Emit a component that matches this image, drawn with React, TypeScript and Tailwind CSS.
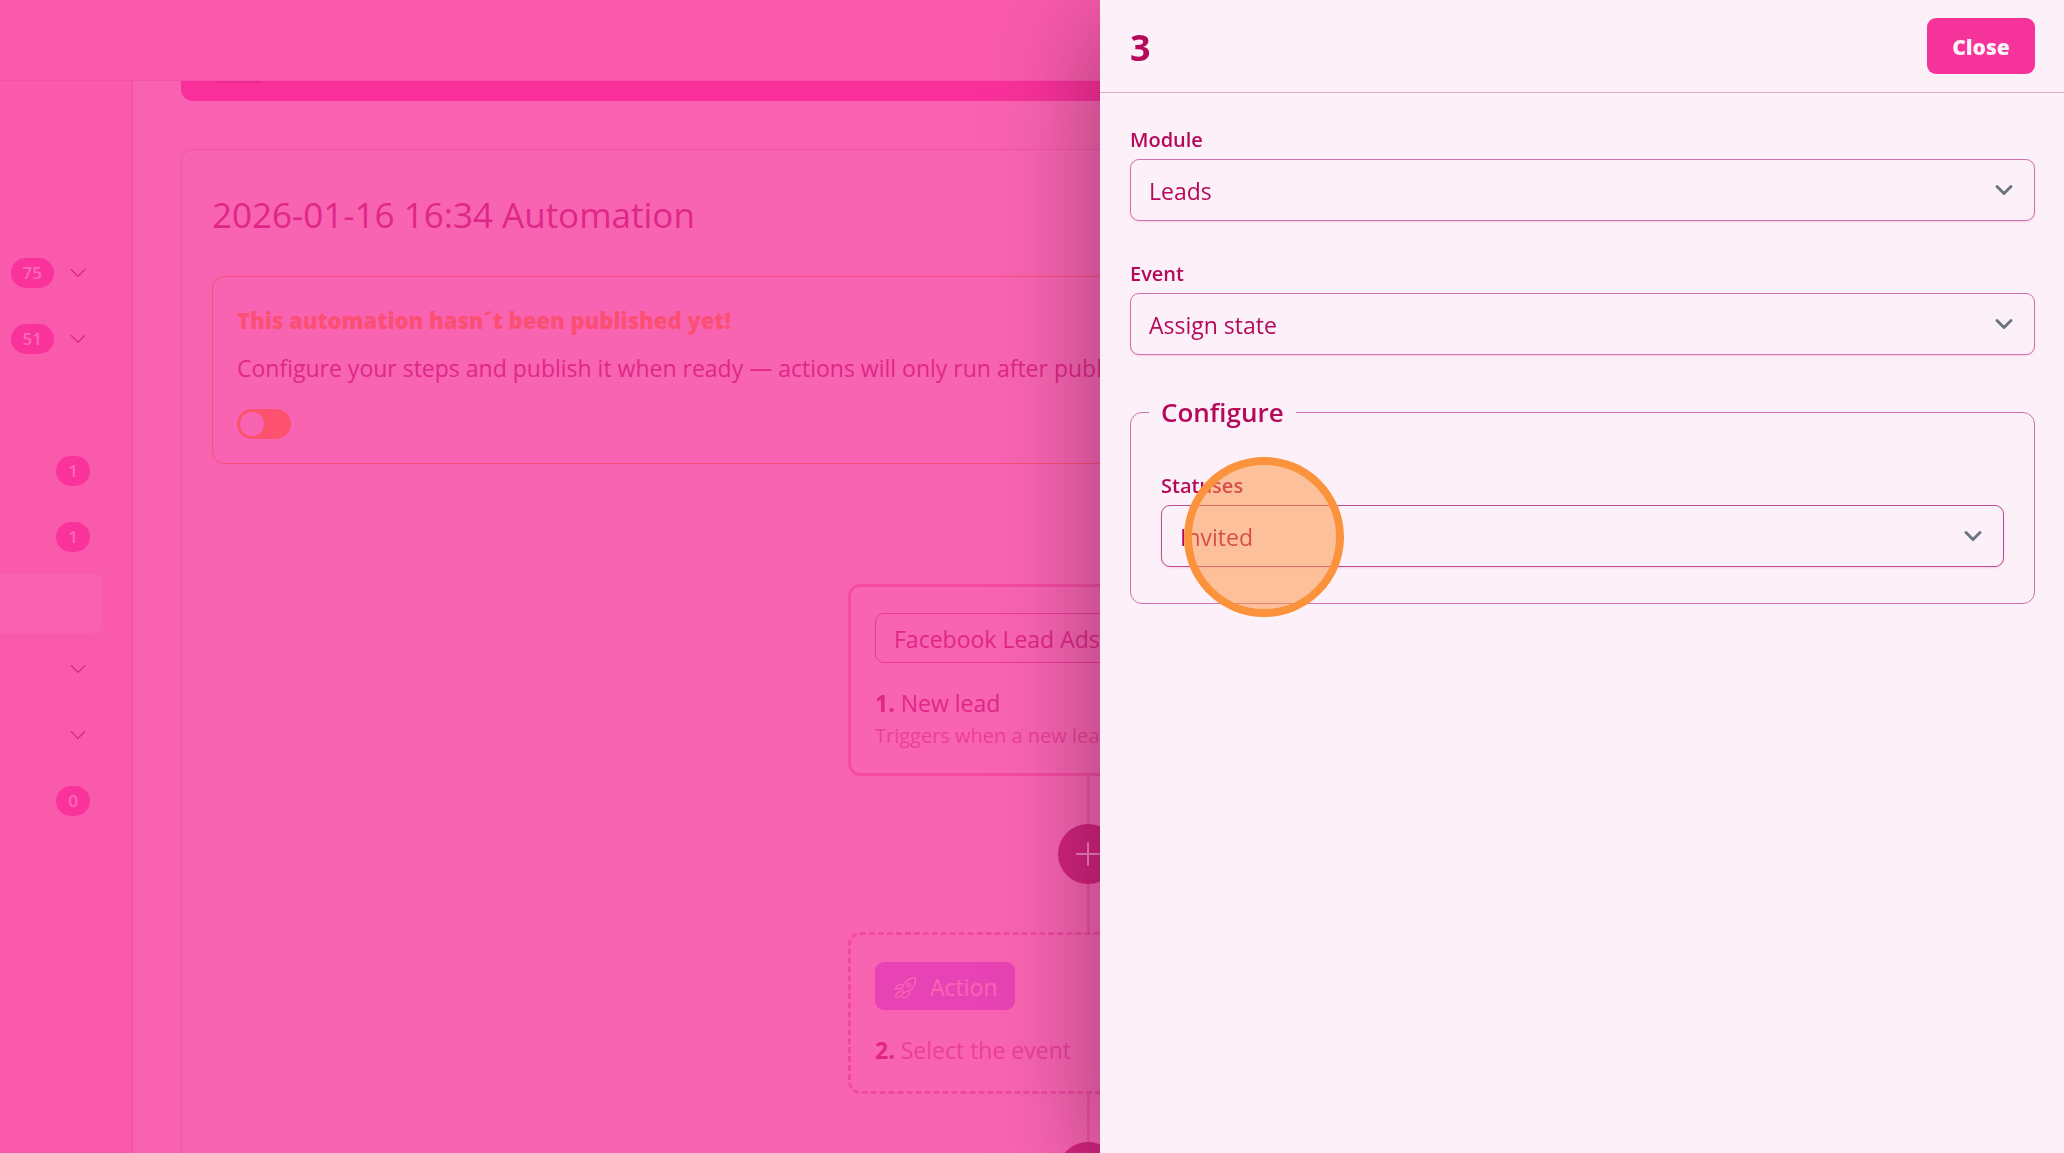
import React, { useState } from 'react';
import clsx from 'clsx';
import { ChevronDown } from 'lucide-react';
import { BsChevronDown, BsPlusLg } from 'react-icons/bs';

type NavItem = { id: string; badge?: string; expandable?: boolean; active?: boolean };

const navItems: NavItem[] = [
  { id: 'leads', badge: '75', expandable: true },
  { id: 'contacts', badge: '51', expandable: true },
  { id: 'calendar' },
  { id: 'messages', badge: '1' },
  { id: 'tasks', badge: '1' },
  { id: 'automations', active: true },
  { id: 'reports', expandable: true },
  { id: 'settings', expandable: true },
  { id: 'archive', badge: '0' },
];

const RocketIcon = () => (
  <svg
    viewBox="0 0 24 24"
    fill="none"
    stroke="currentColor"
    strokeWidth="1.2"
    strokeLinecap="round"
    strokeLinejoin="round"
    className="mt-0.5 size-6"
  >
    <path d="M21.800 1.600c-5.300.2-9.400 2.300-12 6.400l-2.300 5.200 3.300 3.300 5.300-2.400c3.800-2.700 5.600-6.900 5.700-12.500z" />
    <circle cx="14.500" cy="9" r="1.700" />
    <path d="M9.500 8.600c-4-.6-7 .9-8.300 5 2-1 4-1.200 6-.6" />
    <path d="M15.600 14.500c.5 3.700-.9 6-4.600 7.200-2.300.2-3.600-.9-3.300-2.900.3-1.200 1.500-2 3-2.400" />
    <path d="M6.800 15.300c-3 .2-4.900 2.200-5 6 1.300.6 3.500.1 4.300-1.500" />
  </svg>
);

const Sidebar = () => (
  <nav className="w-[133px] shrink-0 border-r border-[#f04da3] bg-[#f95aac] pt-[162px]">
    <ul className="flex flex-col gap-1.5 pr-[30px]">
      {navItems.map((item) => (
        <li
          key={item.id}
          className={clsx(
            'flex h-[60px] items-center justify-end gap-3 rounded-r-lg pr-3',
            item.active && 'bg-[#f962b0]'
          )}
        >
          {item.badge && (
            <span className="flex h-[30px] items-center rounded-full bg-[#f9339b] px-3 text-[17px] font-semibold text-[#fb6ab6]">
              {item.badge}
            </span>
          )}
          {item.expandable && (
            <button type="button" aria-label={`Expand ${item.id}`} className="flex w-6 justify-center">
              <BsChevronDown className="size-[18px] text-[#d81f80]" />
            </button>
          )}
        </li>
      ))}
    </ul>
  </nav>
);

const AddStep = () => (
  <div className="flex flex-col items-center">
    <div className="h-12 w-[3px] bg-[#f352a6]" />
    <button
      type="button"
      aria-label="Add step"
      className="flex size-[60px] items-center justify-center rounded-full bg-[#d4237f] text-[#f77dbd]"
    >
      <BsPlusLg className="size-8" />
    </button>
    <div className="h-12 w-[3px] bg-[#f352a6]" />
  </div>
);

type SelectFieldProps = {
  id: string;
  label: string;
  options: string[];
  focused?: boolean;
};

const SelectField = ({ id, label, options, focused }: SelectFieldProps) => {
  const [value, setValue] = useState(options[0]);

  return (
    <div>
      <label htmlFor={id} className="block h-9 text-xl leading-[34px] font-semibold text-[#b5095c]">
        {label}
      </label>
      <div className="relative">
        <select
          id={id}
          value={value}
          onChange={(e) => setValue(e.target.value)}
          className={clsx(
            'block h-[62px] w-full appearance-none rounded-[9px] border bg-[#fcf1f8] px-[18px] pt-0.5 text-[23px] text-[#b5095c] shadow-xs shadow-pink-200 outline-none',
            focused ? 'border-[#bb4b92]' : 'border-[#d072ac]'
          )}
        >
          {options.map((option) => (
            <option key={option}>{option}</option>
          ))}
        </select>
        <ChevronDown
          strokeWidth={2.5}
          className="pointer-events-none absolute top-[17px] right-[17px] size-7 text-[#6b7280]"
        />
      </div>
    </div>
  );
};

const StepDrawer = ({ onClose }: { onClose: () => void }) => (
  <aside className="fixed inset-y-0 right-0 w-[964px] max-w-full bg-[#fcf1f8] text-[#b5095c] shadow-[0_25px_100px_rgba(0,0,0,0.36)]">
    <header className="flex h-[93px] items-center justify-between border-b border-[#e9a5cd] pr-[29px] pl-[30px]">
      <h2 className="pt-1 text-4xl font-bold">3</h2>
      <button
        type="button"
        onClick={onClose}
        className="h-14 w-27 rounded-[9px] bg-[#f6339a] pt-1 text-[21px] font-extrabold text-[#fdf2f8]"
      >
        Close
      </button>
    </header>

    <form className="flex flex-col gap-9 py-[30px] pr-[29px] pl-[30px]">
      <SelectField id="module" label="Module" options={['Leads']} />
      <SelectField id="event" label="Event" options={['Assign state']} />

      <fieldset className="rounded-xl border border-[#d072ac] px-[30px] pt-9 pb-9">
        <legend className="-ml-3 px-3 text-[26px] leading-[42px] font-semibold">Configure</legend>
        <div className="relative">
          <SelectField id="statuses" label="Statuses" options={['Invited']} focused />
          <div className="pointer-events-none absolute -top-3 left-[23px] size-40 rounded-full border-8 border-[#fb923c] bg-[#fb923c]/50" />
        </div>
      </fieldset>
    </form>
  </aside>
);

const App = () => {
  const [drawerOpen, setDrawerOpen] = useState(true);
  const [published, setPublished] = useState(false);

  return (
    <div className="flex h-screen flex-col overflow-hidden bg-[#f962b0] font-['Open_Sans','Noto_Sans',sans-serif] text-[23px] text-[#df2787]">
      <header className="h-[81px] shrink-0 border-b border-[#f653a8] bg-[#f95aac]" />

      <div className="flex min-h-0 flex-1">
        <Sidebar />

        <main className="min-w-0 flex-1 overflow-hidden pr-[69px] pl-12">
          <div className="h-5 rounded-b-xl bg-[#f9309a] pl-9">
            <div className="h-0.5 w-11 rounded-b-sm bg-[#ee2691]" />
          </div>

          <section className="mt-12 rounded-xl border border-[#f552a8] bg-[#f964b2] px-[30px] pt-10">
            <h1 className="text-[35px] leading-[50px]">2026-01-16 16:34 Automation</h1>

            <div className="mt-9 rounded-xl border border-[#fa5078] p-6">
              <p className="text-[22px] leading-[38px] font-extrabold text-[#fb4f74]">
                This automation hasn´t been published yet!
              </p>
              <p className="mt-2.5 truncate leading-[38px]">
                Configure your steps and publish it when ready — actions will only run after publishing.
              </p>
              <label className="mt-[22px] flex h-[30px] w-[54px] cursor-pointer rounded-full bg-[#fc5270] p-[3px]">
                <input
                  type="checkbox"
                  aria-label="Publish automation"
                  checked={published}
                  onChange={(e) => setPublished(e.target.checked)}
                  className="peer sr-only"
                />
                <span className="size-6 rounded-full bg-[#f964b2] peer-checked:translate-x-6" />
              </label>
            </div>

            <div className="mt-[120px] flex flex-col items-center">
              <article className="h-48 w-[480px] rounded-xl border-3 border-[#f54ba4] px-6 pt-[26px]">
                <span className="flex h-[50px] w-fit items-center rounded-[9px] border border-[#e93a95] px-[18px] pt-0.5">
                  Facebook Lead Ads
                </span>
                <h3 className="mt-[22px] leading-9">
                  <b>1.</b> New lead
                </h3>
                <p className="truncate text-xl leading-[30px] text-[#ec3f98]">
                  Triggers when a new lead is submitted
                </p>
              </article>

              <AddStep />

              <article className="h-[162px] w-[480px] rounded-xl border-3 border-dashed border-[#ef4aa2] px-6 pt-[27px]">
                <span className="flex h-12 w-[140px] items-center gap-3 rounded-[9px] bg-[#e843b4] pt-0.5 pl-[19px] text-[#fa64b3]">
                  <RocketIcon />
                  Action
                </span>
                <h3 className="mt-[22px] leading-9 text-[#ec3f98]">
                  <b className="text-[#df2787]">2.</b> Select the event
                </h3>
              </article>

              <AddStep />
            </div>
          </section>
        </main>
      </div>

      {drawerOpen && <StepDrawer onClose={() => setDrawerOpen(false)} />}
    </div>
  );
};

export default App;
